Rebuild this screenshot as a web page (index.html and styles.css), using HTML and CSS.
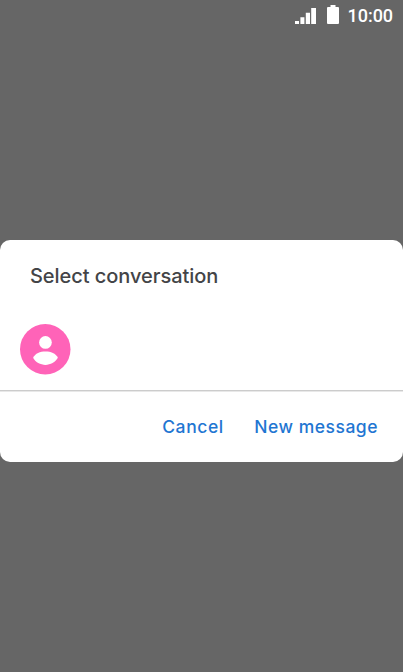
FILE: index.html
```html
<!DOCTYPE html>
<html lang="en">
<head>
<meta charset="utf-8">
<title>Select conversation</title>
<link rel="stylesheet" href="styles.css">
</head>
<body>
<header class="status">
<svg class="signal" viewBox="0 0 21 19"><path d="M0 16h4v3H0zM5.4 12.3h4V19h-4zM10.8 7.7h4.2V19h-4.2zM16.2 3H21v16h-4.8z"/></svg>
<svg class="battery" viewBox="0 0 12 19"><path d="M3.5 0h5v2H11q1 0 1 1v15q0 1-1 1H1q-1 0-1-1V3q0-1 1-1h2.5z"/></svg>
<span class="clock">10:00</span>
</header>
<main class="dialog">
<h1 class="title">Select conversation</h1>
<div class="contact">
<svg class="avatar" viewBox="0 0 50 50"><circle class="disc" cx="25" cy="25" r="25"/><circle cx="25.2" cy="18.2" r="6.3"/><path d="M13 33.5C15 29 20 27.2 25.2 27.2S35.5 29 37.5 33.5C35 38 30 40.5 25.2 40.5S15 38 13 33.5Z"/></svg>
</div>
<footer class="actions">
<button class="cancel">Cancel</button>
<button class="new">New message</button>
</footer>
</main>
</body>
</html>
```
FILE: styles.css
```css
* { box-sizing: border-box; }
body { margin: 0; height: 672px; overflow: hidden; background: #666; font-family: Inter, sans-serif; }
.status { height: 240px; padding: 5px 10px 0 0; display: flex; justify-content: flex-end; align-items: flex-start; color: #fff; }
.status svg { fill: #fff; }
.signal { width: 21px; height: 19px; margin-right: 11px; }
.battery { width: 12px; height: 19px; margin-right: 9px; }
.clock { margin-top: 1px; font: 500 18px/20px Roboto, sans-serif; letter-spacing: -0.05px; }
.dialog { height: 222px; background: #fff; border-radius: 10px; }
.title { margin: 0; height: 84px; padding: 24px 30px 0; font-size: 20px; line-height: 24px; font-weight: 450; letter-spacing: -0.05px; color: #434447; }
.contact { height: 67px; padding-left: 20px; border-bottom: 1px solid #ccc; box-shadow: 0 1px #e8e8e8; }
.avatar { display: block; width: 50.5px; height: 50.5px; fill: #fff; }
.disc { fill: #ff63b8; }
.actions { display: flex; justify-content: flex-end; gap: 30.5px; padding: 24px 25px 0 0; }
button { border: 0; padding: 0; background: none; color: #1f76d2; font: 500 17.5px/24px Inter, sans-serif; letter-spacing: 0.5px; }
.cancel { letter-spacing: 0.6px; }
```
